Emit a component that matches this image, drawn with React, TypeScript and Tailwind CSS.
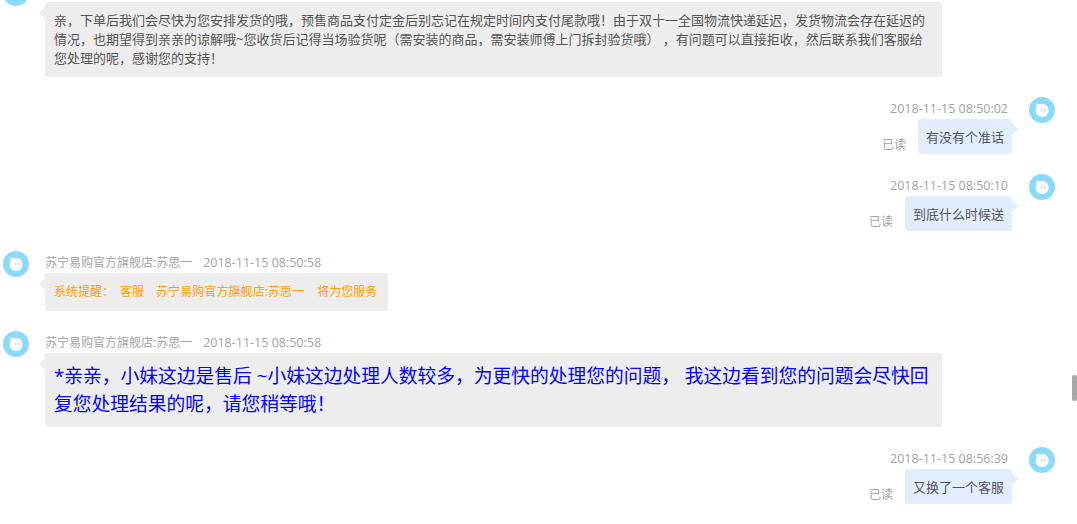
import React from 'react'

const font = { fontFamily: '"Open Sans", "Noto Sans CJK SC", sans-serif' }

const firstReply =
  '亲，下单后我们会尽快为您安排发货的哦，预售商品支付定金后别忘记在规定时间内支付尾款哦！由于双十一全国物流快递延迟，发货物流会存在延迟的情况，也期望得到亲亲的谅解哦~您收货后记得当场验货呢（需安装的商品，需安装师傅上门拆封验货哦）\u00a0，有问题可以直接拒收，然后联系我们客服给您处理的呢，感谢您的支持！'

function Avatar() {
  return (
    <svg width="26" height="26" viewBox="0 0 26 26" className="shrink-0">
      <circle cx="13" cy="13" r="13" fill="#8bdafe" />
      <path d="M7.2 6.8C9 7.4 10.4 7.3 12 7.1C16.4 6.7 19.6 9.6 19.6 13.4C19.6 17.2 16.8 20 13.2 20C9.6 20 6.6 17.4 6.6 13.8C6.6 12.4 7 11.4 7.7 10.4C7.6 9.2 7.4 8 7.2 6.8Z" fill="#ffffff" />
      <rect x="12.4" y="11.6" width="1" height="3" rx="0.5" fill="#8bdafe" />
      <rect x="15.4" y="11.6" width="1" height="3" rx="0.5" fill="#8bdafe" />
    </svg>
  )
}

function LeftMessage({ name, time, children }: { name?: string; time?: string; children: React.ReactNode }) {
  return (
    <div className="flex pl-[3px] gap-4">
      <Avatar />
      <div className="flex flex-col items-start">
        <div className="flex h-[22px] gap-[11px] text-[#a3a3a3]">
          <span className="text-xs leading-[24px]">{name}</span>
          <span className="text-[12.5px] leading-[24px]">{time}</span>
        </div>
        <div className="relative rounded-[3px] bg-[#ededed] py-[9px] px-[9px] max-w-[897px]">
          <div className="absolute -left-[6px] top-[5px] h-0 w-0 border-y-[6px] border-r-[6px] border-y-transparent border-r-[#ededed]" />
          {children}
        </div>
      </div>
    </div>
  )
}

function RightMessage({ time, read, text }: { time: string; read: string; text: string }) {
  return (
    <div className="flex justify-end pr-[22px] gap-[17px]">
      <div className="flex flex-col items-end">
        <div className="h-[22px] pr-1 text-[12.5px] leading-[24px] text-[#a3a3a3]">{time}</div>
        <div className="flex items-end gap-3">
          <span className="text-xs leading-[18px] text-[#a3a3a3]">{read}</span>
          <div className="relative rounded-[3px] bg-[#e1eeff] px-2 pt-[9px] pb-[7px] text-[13px] leading-[19px] text-[#555555]">
            <div className="absolute -right-[6px] top-[4px] h-0 w-0 border-y-[6px] border-l-[6px] border-y-transparent border-l-[#e1eeff]" />
            {text}
          </div>
        </div>
      </div>
      <Avatar />
    </div>
  )
}

export default function App() {
  const shop = '苏宁易购官方旗舰店:苏思一'

  return (
    <div className="relative h-[524px] w-[1077px] overflow-hidden bg-white" style={font}>
      <div className="-mt-5 flex flex-col gap-5">
        <LeftMessage>
          <p className="text-[13px] leading-[19px] text-[#555555]">{firstReply}</p>
        </LeftMessage>
        <RightMessage time="2018-11-15 08:50:02" read="已读" text="有没有个准话" />
        <RightMessage time="2018-11-15 08:50:10" read="已读" text="到底什么时候送" />
        <LeftMessage name={shop} time="2018-11-15 08:50:58">
          <p className="flex whitespace-nowrap pr-[2px] text-xs leading-5 text-[#ff9d00]">
            <span className="mr-[6px]">系统提醒：</span>
            <span className="mr-3">客服</span>
            <span className="mr-[13px] tracking-[0.08px]">苏宁易购官方旗舰店:苏思一</span>
            <span>将为您服务</span>
          </p>
        </LeftMessage>
        <LeftMessage name={shop} time="2018-11-15 08:50:58">
          <p className="text-[18.75px] leading-7 text-[#0000ff]">
            *亲亲，小妹这边是售后 ~小妹这边处理人数较多，为更快的处理您的问题， 我这边看到您的问题会尽快回复您处理结果的呢，请您稍等哦！
          </p>
        </LeftMessage>
        <RightMessage time="2018-11-15 08:56:39" read="已读" text="又换了一个客服" />
      </div>
      <div className="absolute right-0 top-[375px] h-[26px] w-[5px] rounded-[2px] bg-[#a8a8a8]" />
    </div>
  )
}
